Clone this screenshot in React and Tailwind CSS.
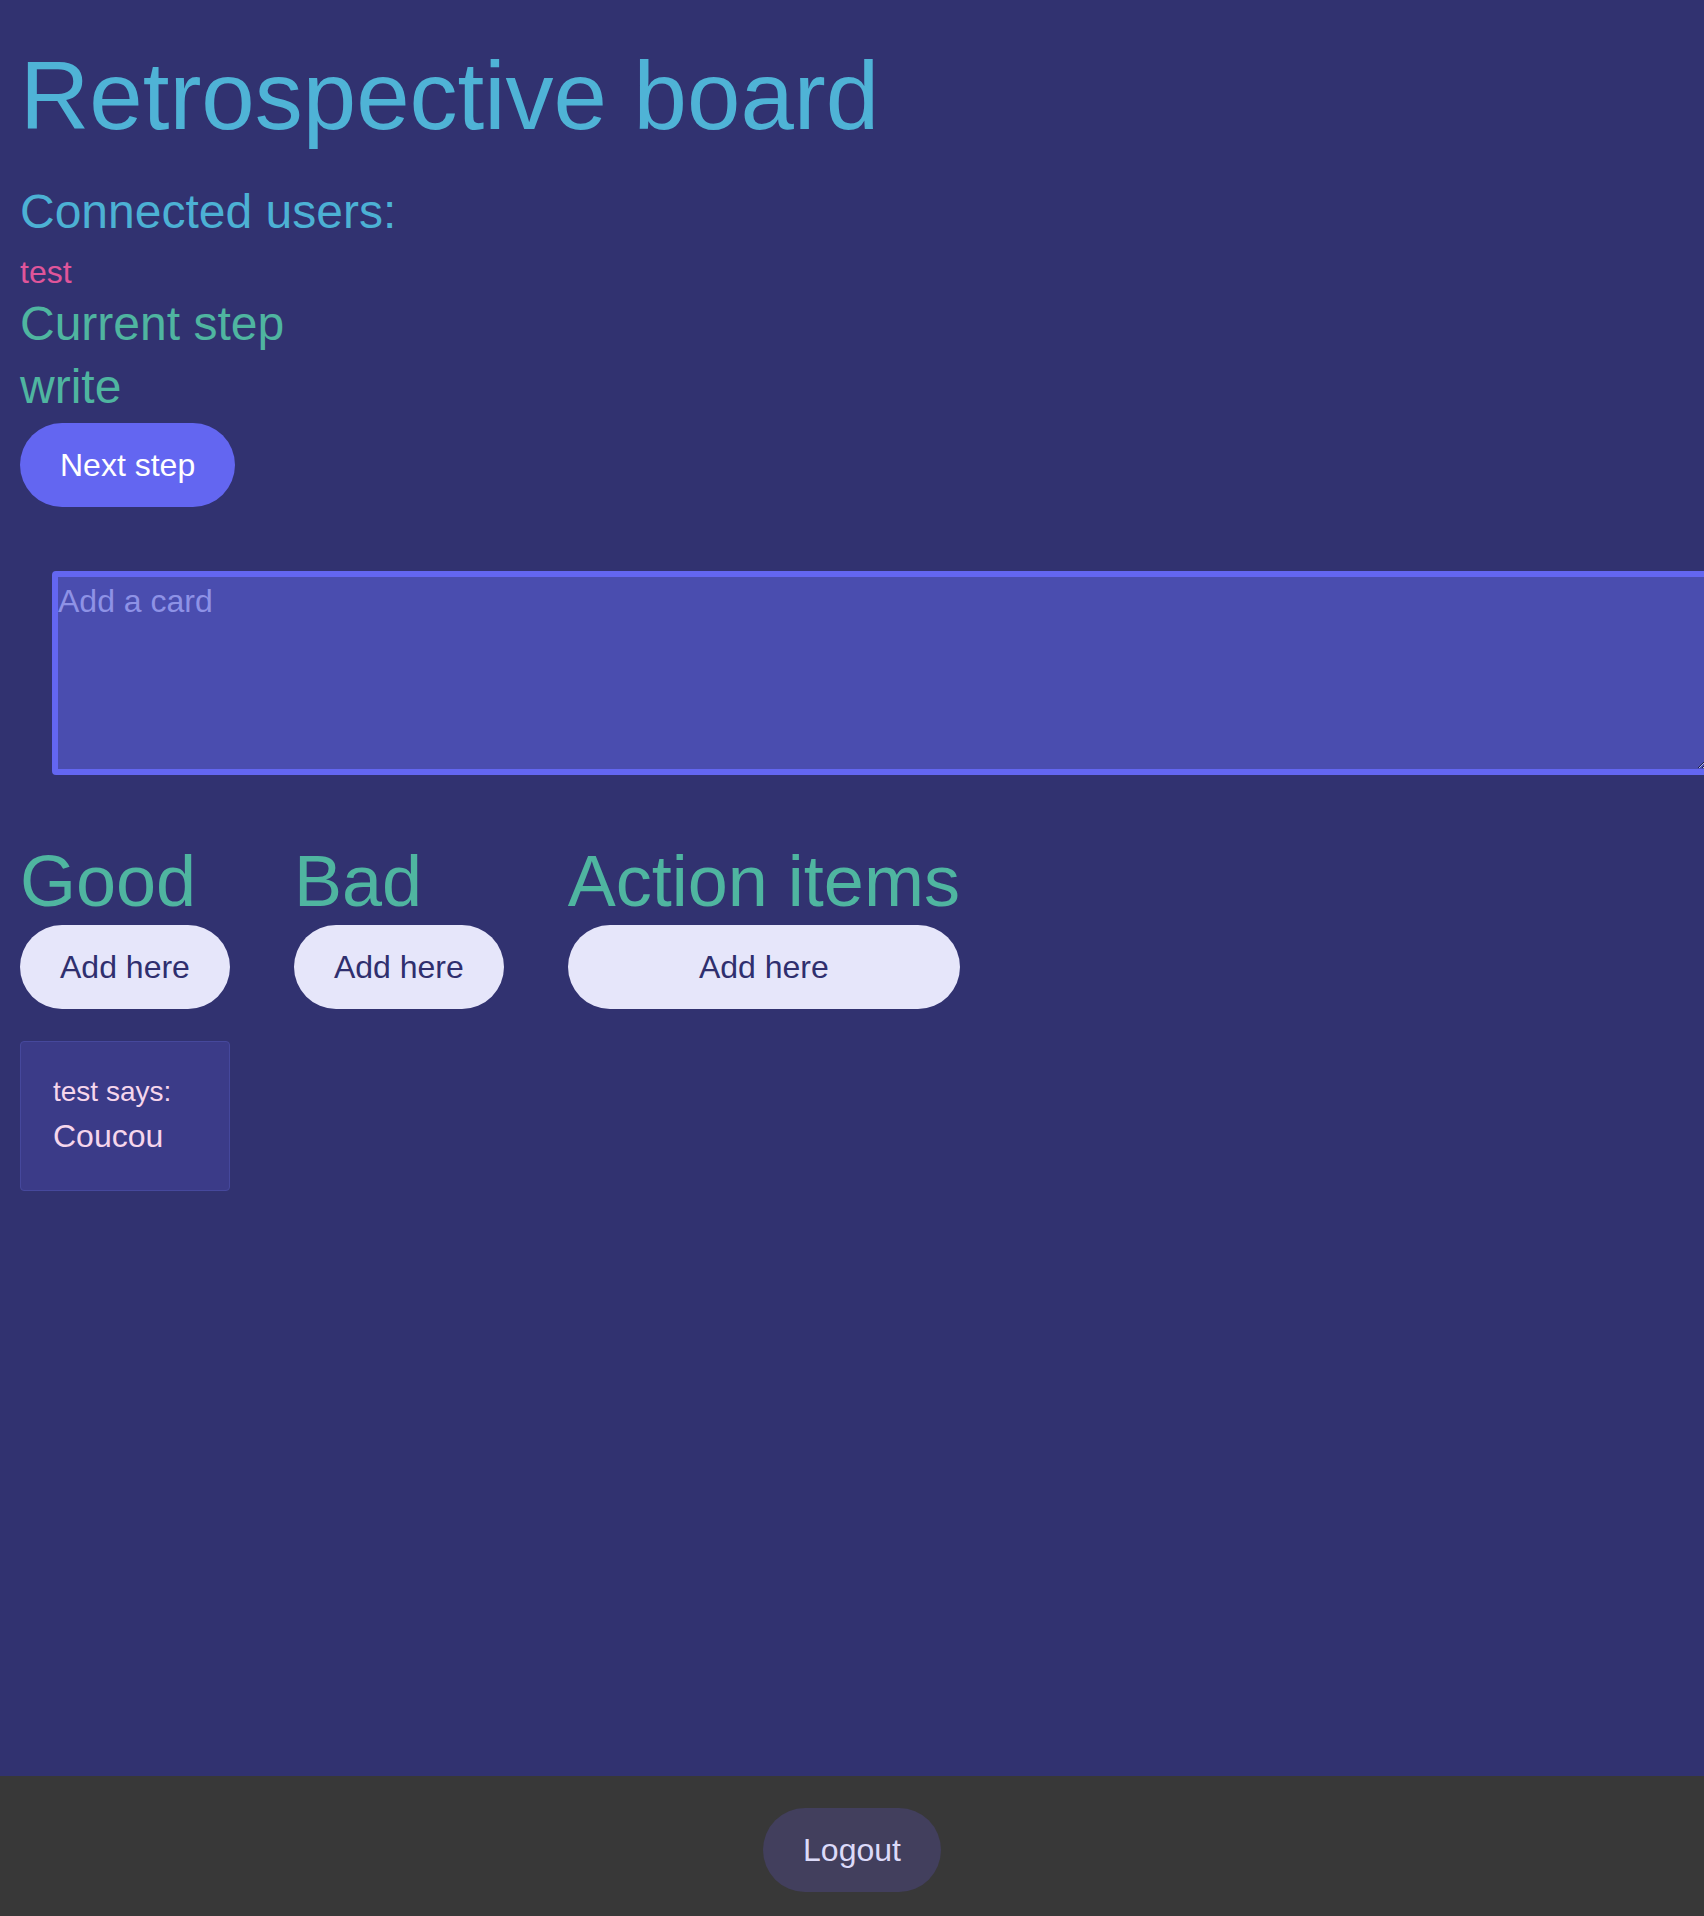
import { useState } from "react"

const columns = [
  { title: "Good", cards: [{ author: "test", text: "Coucou" }] },
  { title: "Bad", cards: [] },
  { title: "Action items", cards: [] },
]

function Column({ title, cards }) {
  return (
    <div className="flex flex-col">
      <h2 className="text-7xl leading-none text-[#4fb5a0]">{title}</h2>
      <button
        type="button"
        className="mt-2 rounded-full bg-[#e6e6fa] px-10 py-5 text-[32px] leading-[44px] text-[#2f2f6e]"
      >
        Add here
      </button>
      {cards.map((card, i) => (
        <div
          key={i}
          className="mt-8 rounded-[4px] border border-[#46489c] bg-[#3b3b88] px-8 py-[30px] text-[#f6d6ec]"
        >
          <p className="text-[28px] leading-[40px]">{card.author} says:</p>
          <p className="text-[32px] leading-[48px]">{card.text}</p>
        </div>
      ))}
    </div>
  )
}

export default function App() {
  const [draft, setDraft] = useState("")

  return (
    <div
      className="flex min-h-screen flex-col overflow-x-hidden bg-[#313270]"
      style={{ fontFamily: '"Liberation Sans", Arial, sans-serif' }}
    >
      <main className="flex-1 px-5 pt-12">
        <h1 className="text-[96px] leading-none text-[#4fb3d6]">Retrospective board</h1>
        <h3 className="mt-11 text-5xl leading-none text-[#4cb1d4]">Connected users:</h3>
        <p className="mt-5 text-[32px] leading-none text-[#e0559a]">test</p>
        <h3 className="mt-3 text-5xl leading-none text-[#4fb5a0]">Current step</h3>
        <p className="mt-[15px] text-5xl leading-none text-[#4fb5a0]">write</p>
        <button
          type="button"
          className="mt-3 rounded-full bg-[#6366f1] px-10 py-5 text-[32px] leading-[44px] text-white"
        >
          Next step
        </button>

        <div className="mt-16 pl-8">
          <textarea
            value={draft}
            onChange={(e) => setDraft(e.target.value)}
            placeholder="Add a card"
            className="block h-[204px] w-[calc(100%+28px)] rounded-[4px] border-[6px] border-[#6366f1] bg-[#4a4daf] text-[32px] leading-[1.5] text-white outline-none placeholder:text-[#8e92e6]"
          />
        </div>

        <div className="mt-[70px] flex items-start gap-16">
          {columns.map((col) => (
            <Column key={col.title} {...col} />
          ))}
        </div>
      </main>

      <footer className="flex justify-center bg-[#383838] pt-8 pb-6">
        <button
          type="button"
          className="rounded-full bg-[#423f5d] px-10 py-5 text-[32px] leading-[44px] text-[#dcdaf9]"
        >
          Logout
        </button>
      </footer>
    </div>
  )
}
